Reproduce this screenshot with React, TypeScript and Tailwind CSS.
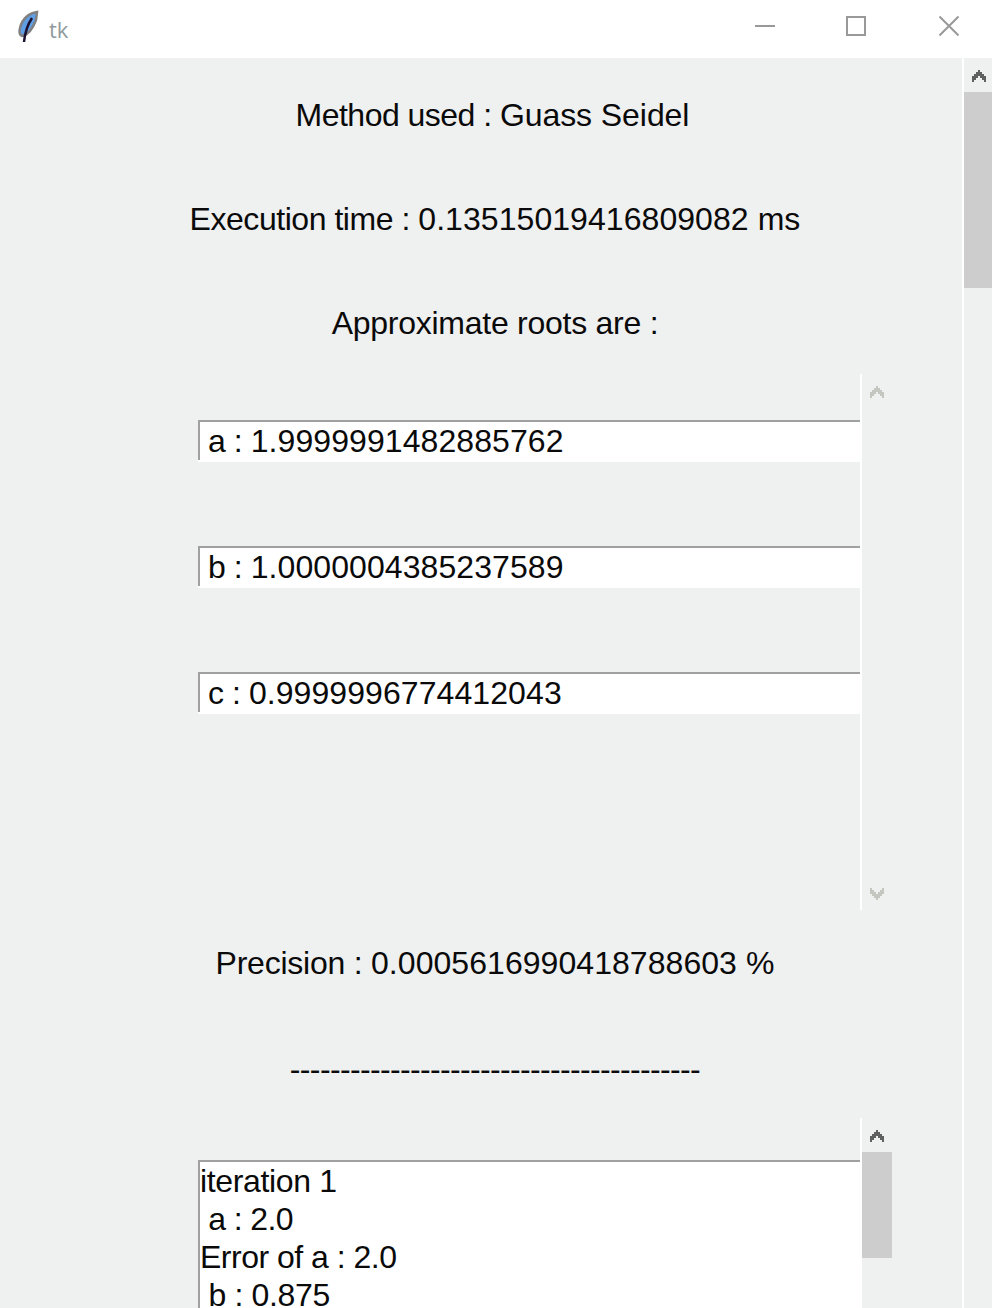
import type { ReactNode } from "react"

const roots = [
  { label: "a : ", value: "1.9999991482885762" },
  { label: "b : ", value: "1.0000004385237589" },
  { label: "c : ", value: "0.9999996774412043" },
]
const iterationLines = [
  { text: "iteration 1", tracking: "tracking-[-0.35px]" },
  { text: " a : 2.0", tracking: "tracking-[-0.6px]" },
  { text: "Error of a : 2.0", tracking: "tracking-[-0.5px]" },
  { text: " b : 0.875", tracking: "tracking-[-0.35px]" },
]

function Chevron({ down, color }: { down?: boolean; color: string }) {
  return (
    <svg width="14" height="12" viewBox="0 0 14 12" shapeRendering="crispEdges" className={down ? "rotate-180" : ""}>
      <path d="M6 0h2v2h2v2h2v2h2v6h-2v-2h-2v-2h-2V6H6v2H4v2H2v2H0V6h2V4h2V2h2z" fill={color} />
    </svg>
  )
}

function TitleBar() {
  return (
    <div className="flex h-[58px] items-center bg-white">
      <svg width="24" height="34" viewBox="0 0 24 34" className="ml-[16px] mt-[-4px]">
        <path d="M21 2 C13 3 6 9 4 18 C3 22 4 25 6 26 C12 25 17 18 20 10 Z" fill="#5f9fe6" stroke="#808080" strokeWidth="2.5" />
        <path d="M16 8 C12 14 9 22 8 32" fill="none" stroke="#1c1030" strokeWidth="2.5" />
      </svg>
      <span className="ml-[9px] font-['Open_Sans',sans-serif] text-[22px] leading-none text-[#8f9a9c]">tk</span>
      <div className="ml-auto flex items-center pb-[6px]">
        <div className="mr-[71px] h-[2px] w-[20px] bg-[#999999]" />
        <div className="mr-[73px] h-[20px] w-[20px] border-2 border-[#999999]" />
        <svg width="20" height="20" viewBox="0 0 20 20" className="mr-[33px]">
          <path d="M0.5 0.5 19.5 19.5 M19.5 0.5 0.5 19.5" stroke="#999999" strokeWidth="2" />
        </svg>
      </div>
    </div>
  )
}

function TextLine({ children, className = "" }: { children: ReactNode; className?: string }) {
  return <p className={`h-[40px] whitespace-pre text-center leading-[42px] ${className}`}>{children}</p>
}

export default function App() {
  return (
    <div className="h-[1308px] w-[992px] overflow-hidden bg-[#eff0f0] font-['Liberation_Sans',Arial,sans-serif] text-[32px] text-[#0a0a0a]">
      <TitleBar />
      <div className="flex h-[1250px]">
        <main className="flex w-[962px] flex-col items-center overflow-hidden pl-[28px] pt-[36px]">
          <TextLine className="mr-[5px] tracking-[-0.07px]">
            <span className="tracking-[-0.53px]">Method used : </span>Guass Seidel
          </TextLine>
          <TextLine className="mt-[64px] tracking-[0.06px]">
            <span className="tracking-[-0.46px]">Execution time : </span>0.13515019416809082 ms
          </TextLine>
          <TextLine className="mt-[64px] tracking-[-0.26px]">Approximate roots are :</TextLine>

          <section className="ml-[170px] mt-[32px] flex h-[536px] shrink-0 self-start">
            <div className="w-[662px] pt-[46px]">
              {roots.map((root) => (
                <div key={root.label} className="mb-[84px] h-[42px] bg-white">
                  <div className="h-[40px] whitespace-pre border-l-2 border-t-2 border-[#a0a0a0] pl-[8px] leading-[38px] tracking-[0.08px]">
                    <span className="tracking-[-0.45px]">{root.label}</span>
                    {root.value}
                  </div>
                </div>
              ))}
            </div>
            <div className="w-[2px] bg-white" />
            <div className="flex w-[30px] flex-col items-center justify-between pb-[10px] pt-[12px]">
              <Chevron color="#c3c7bf" />
              <Chevron down color="#c3c7bf" />
            </div>
          </section>

          <TextLine className="mt-[32px] tracking-[0.055px]">
            <span className="tracking-[-0.24px]">Precision : </span>0.0005616990418788603 %
          </TextLine>
          <TextLine className="mt-[66px] tracking-[-0.65px]">-----------------------------------------</TextLine>

          <section className="ml-[170px] mt-[30px] flex h-[190px] shrink-0 self-start">
            <div className="w-[662px] pt-[42px]">
              <div className="h-[152px] overflow-hidden border-l-2 border-t-2 border-[#a0a0a0] bg-white">
                {iterationLines.map((line) => (
                  <div key={line.text} className={`h-[38px] whitespace-pre leading-[38px] ${line.tracking}`}>{line.text}</div>
                ))}
              </div>
            </div>
            <div className="w-[2px] bg-white" />
            <div className="flex w-[30px] flex-col items-center">
              <div className="flex h-[34px] w-full shrink-0 items-start justify-center pt-[12px]">
                <Chevron color="#606060" />
              </div>
              <div className="h-[106px] w-full bg-[#cdcdcd]" />
            </div>
          </section>
        </main>
        <div className="w-[2px] bg-white" />
        <aside className="flex w-[28px] flex-col items-center">
          <div className="flex h-[34px] w-full shrink-0 justify-center pl-[2px] pt-[12px]">
            <Chevron color="#606060" />
          </div>
          <div className="h-[196px] w-full bg-[#cdcdcd]" />
        </aside>
      </div>
    </div>
  )
}
